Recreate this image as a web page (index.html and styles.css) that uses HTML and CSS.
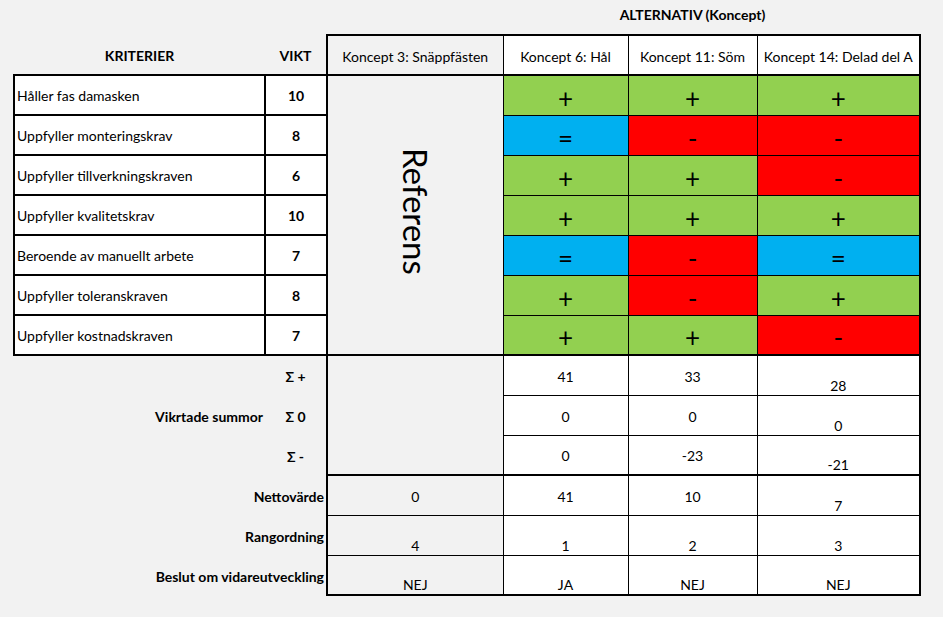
FILE: index.html
```html
<!DOCTYPE html>
<html lang="sv">
<head>
<meta charset="utf-8">
<title>Konceptval</title>
<link rel="stylesheet" href="styles.css">
</head>
<body>
<table class="sheet">
  <colgroup>
    <col class="col-krit"><col class="col-vikt"><col class="col-k3"><col class="col-k6"><col class="col-k11"><col class="col-k14">
  </colgroup>
  <tbody>
    <tr class="row-title">
      <td></td><td></td><td></td><td></td>
      <td class="title"><div class="spill">ALTERNATIV (Koncept)</div></td>
      <td></td>
    </tr>
    <tr class="row-head">
      <td class="head-plain">KRITERIER</td>
      <td class="head-plain">VIKT</td>
      <td class="head k3">Koncept 3: Snäppfästen</td>
      <td class="head">Koncept 6: Hål</td>
      <td class="head">Koncept 11: Söm</td>
      <td class="head last">Koncept 14: Delad del A</td>
    </tr>
    <tr>
      <td class="krit">Håller fas damasken</td><td class="vikt">10</td>
      <td class="ref" rowspan="7"><span class="ref-text">Referens</span></td>
      <td class="sym g">+</td><td class="sym g">+</td><td class="sym g last">+</td>
    </tr>
    <tr>
      <td class="krit">Uppfyller monteringskrav</td><td class="vikt">8</td>
      <td class="sym b">=</td><td class="sym r">-</td><td class="sym r last">-</td>
    </tr>
    <tr>
      <td class="krit">Uppfyller tillverkningskraven</td><td class="vikt">6</td>
      <td class="sym g">+</td><td class="sym g">+</td><td class="sym r last">-</td>
    </tr>
    <tr>
      <td class="krit">Uppfyller kvalitetskrav</td><td class="vikt">10</td>
      <td class="sym g">+</td><td class="sym g">+</td><td class="sym g last">+</td>
    </tr>
    <tr>
      <td class="krit">Beroende av manuellt arbete</td><td class="vikt">7</td>
      <td class="sym b">=</td><td class="sym r">-</td><td class="sym b last">=</td>
    </tr>
    <tr>
      <td class="krit">Uppfyller toleranskraven</td><td class="vikt">8</td>
      <td class="sym g">+</td><td class="sym r">-</td><td class="sym g last">+</td>
    </tr>
    <tr class="end">
      <td class="krit">Uppfyller kostnadskraven</td><td class="vikt">7</td>
      <td class="sym g">+</td><td class="sym g">+</td><td class="sym r last">-</td>
    </tr>
    <tr>
      <td></td><td class="sigma">Σ +</td>
      <td class="k3-sum" rowspan="3"></td>
      <td class="val">41</td><td class="val">33</td><td class="val bot last">28</td>
    </tr>
    <tr>
      <td class="label-sum">Vikrtade summor</td><td class="sigma">Σ 0</td>
      <td class="val">0</td><td class="val">0</td><td class="val bot last">0</td>
    </tr>
    <tr class="end">
      <td></td><td class="sigma">Σ -</td>
      <td class="val">0</td><td class="val">-23</td><td class="val bot last">-21</td>
    </tr>
    <tr>
      <td class="label-res" colspan="2">Nettovärde</td>
      <td class="val k3v">0</td><td class="val">41</td><td class="val">10</td><td class="val bot last">7</td>
    </tr>
    <tr>
      <td class="label-res" colspan="2">Rangordning</td>
      <td class="val k3v bot">4</td><td class="val bot">1</td><td class="val bot">2</td><td class="val bot last">3</td>
    </tr>
    <tr class="end">
      <td class="label-res" colspan="2">Beslut om vidareutveckling</td>
      <td class="val k3v bot">NEJ</td><td class="val bot">JA</td><td class="val bot">NEJ</td><td class="val bot last">NEJ</td>
    </tr>
  </tbody>
</table>
</body>
</html>
```

FILE: styles.css
```css
* { box-sizing: border-box; }
html, body { margin: 0; }
body {
  background: #f2f2f2;
  font-family: Lato, "Open Sans", sans-serif;
  font-size: 14px;
  color: #000;
}
.sheet {
  border-collapse: collapse;
  table-layout: fixed;
  width: 906px;
  margin-left: 13px;
}
.col-krit { width: 251px; }
.col-vikt { width: 62px; }
.col-k3 { width: 176px; }
.col-k6 { width: 125px; }
.col-k11 { width: 129px; }
.col-k14 { width: 163px; }

td {
  height: 40px;
  padding: 0 2px;
  text-align: center;
  vertical-align: middle;
  white-space: nowrap;
  overflow: visible;
}
.row-title td { height: 35px; }

.title { font-weight: bold; padding-bottom: 6px; }
.spill { display: flex; justify-content: center; }

.row-head td { padding-top: 2px; }
.head-plain { font-weight: bold; }
.head {
  background: #fff;
  border-top: 2px solid #000;
  border-bottom: 2px solid #000;
  border-left: 1px solid #000;
  border-right: 1px solid #000;
}
.head.k3 { background: #f2f2f2; border-left: 2px solid #000; }

.krit {
  background: #fff;
  border: 2px solid #000;
  text-align: left;
  padding-left: 2px;
}
.vikt {
  background: #fff;
  border: 2px solid #000;
  font-weight: bold;
}
.ref {
  background: #f2f2f2;
  border-left: 2px solid #000;
  border-bottom: 2px solid #000;
  border-right: 1px solid #000;
}
.ref-text {
  display: inline-block;
  writing-mode: vertical-rl;
  font-size: 33px;
  line-height: 1;
  margin-bottom: 4px;
}
.sym {
  border: 1px solid #000;
  font-size: 26px;
  line-height: 1;
  padding-top: 5px;
}
.sym.g { background: #92d050; }
.sym.b { background: #00b0f0; }
.sym.r { background: #ff0000; }

td.last { border-right: 2px solid #000; }
tr.end td.sym, tr.end td.val, tr.end td.krit, tr.end td.vikt { border-bottom: 2px solid #000; }

.sigma { font-weight: bold; padding-top: 2px; }
.label-sum { font-weight: bold; text-align: right; padding-top: 2px; }
.label-res { font-weight: bold; text-align: right; padding-right: 2px; padding-top: 2px; }

.k3-sum {
  background: #f2f2f2;
  border-left: 2px solid #000;
  border-bottom: 2px solid #000;
  border-right: 1px solid #000;
}
.val {
  background: #fff;
  border: 1px solid #000;
  padding-top: 2px;
}
.val.k3v { background: #f2f2f2; border-left: 2px solid #000; }
.val.bot { vertical-align: bottom; padding-bottom: 1px; }
```
